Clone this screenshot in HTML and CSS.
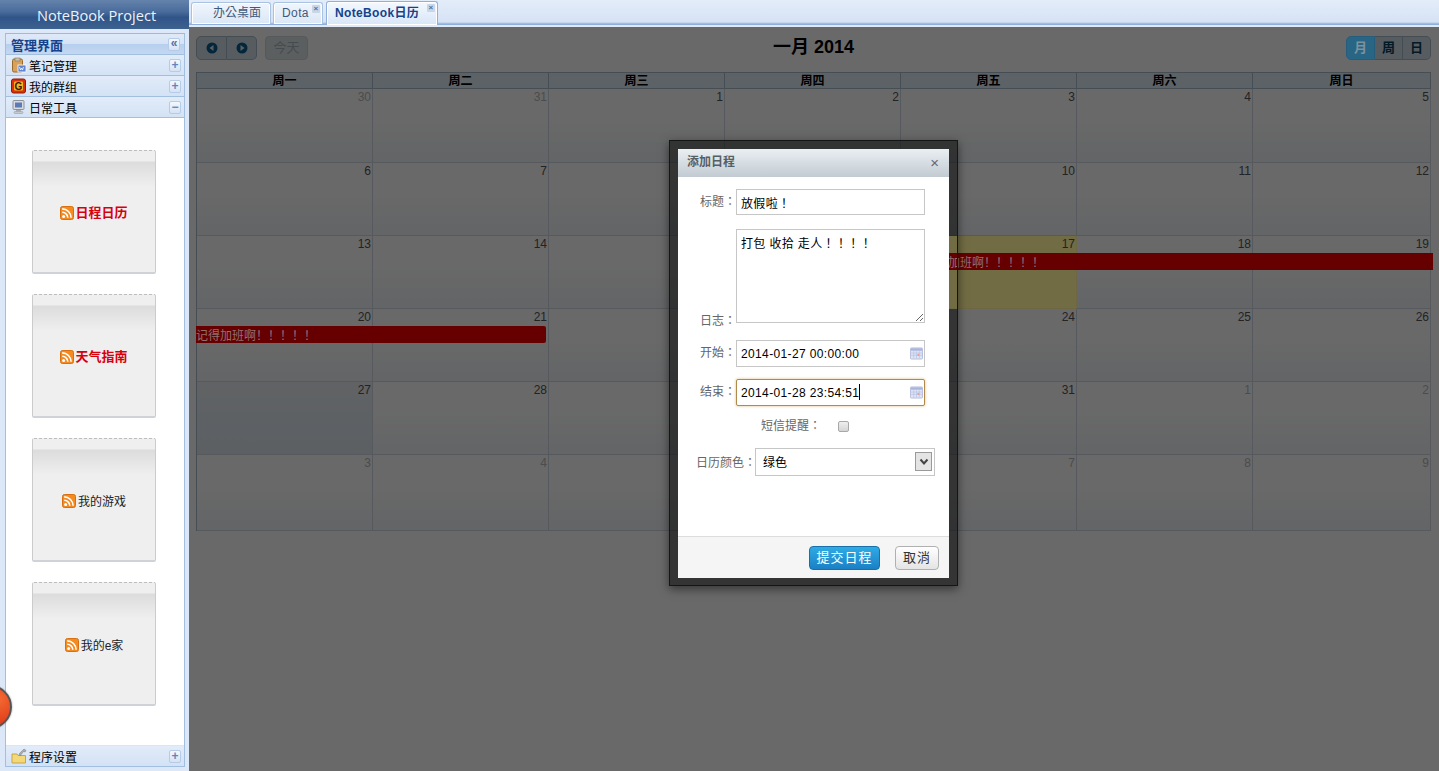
FILE: index.html
```html
<!DOCTYPE html>
<html lang="zh-Hant">
<head>
<meta charset="utf-8">
<title>NoteBook Project</title>
<link rel="stylesheet" href="styles.css">
</head>
<body>
<svg class="sprites" width="0" height="0" aria-hidden="true">
  <symbol id="rss" viewBox="0 0 14 14">
    <rect x="0.5" y="0.5" width="13" height="13" rx="2" fill="#f58a1f" stroke="#d9700f"/>
    <circle cx="3.6" cy="10.4" r="1.5" fill="#fff"/>
    <path d="M2.2 6.2a5.6 5.6 0 0 1 5.6 5.6M2.2 2.9a8.9 8.9 0 0 1 8.9 8.9" fill="none" stroke="#fff" stroke-width="1.6"/>
  </symbol>
  <symbol id="cal" viewBox="0 0 14 13">
    <rect x="0.5" y="0.5" width="13" height="12" rx="1" fill="#dfe4f5" stroke="#b4bcdc"/>
    <rect x="1" y="1" width="12" height="2.5" fill="#a9b4dc"/>
    <path d="M1 6h12M1 8.500h12M4 4v8M7 4v8M10 4v8" stroke="#b9c3e6" stroke-width=".8"/>
    <rect x="8" y="7" width="2" height="2" fill="#e6a090"/>
  </symbol>
</svg>

<aside class="sidebar">
  <h1 class="brand">NoteBook Project</h1>
  <div class="accordion">
    <div class="acc-title"><span class="acc-title-text">管理界面</span><span class="tool tool-collapse">«</span></div>
    <div class="acc-row">
      <svg class="acc-icon" viewBox="0 0 16 16"><rect x="1.500" y="2" width="10" height="13" rx="1.500" fill="#d9a25a" stroke="#9a6a2a"/><rect x="4" y="1" width="5" height="3" fill="#c9c2b0" stroke="#85745a" stroke-width=".6"/><rect x="7" y="8" width="8" height="7" fill="#5f86cf" stroke="#fff" stroke-width=".8"/><path d="M8.500 10l1 3 1-2 1 2 1-3" fill="none" stroke="#fff" stroke-width=".8"/></svg>
      <span class="acc-label">笔记管理</span><span class="tool">+</span>
    </div>
    <div class="acc-row">
      <svg class="acc-icon" viewBox="0 0 16 16"><rect x="0.500" y="1" width="14" height="14" rx="2" fill="#d9300f" stroke="#8c1d08"/><rect x="3" y="3.500" width="9" height="9" rx="1" fill="#f5b520"/><text x="7.500" y="11.500" text-anchor="middle" class="g-letter">G</text></svg>
      <span class="acc-label">我的群组</span><span class="tool">+</span>
    </div>
    <div class="acc-row">
      <svg class="acc-icon" viewBox="0 0 16 16"><rect x="2" y="1.500" width="11" height="9" rx="1" fill="#d8dbe0" stroke="#8c929c"/><rect x="4" y="3.500" width="7" height="5" fill="#5c7bb5"/><rect x="5" y="11" width="5" height="1.500" fill="#a6abb3"/><rect x="3" y="12.500" width="9" height="2" rx="1" fill="#c6c9cf" stroke="#8c929c" stroke-width=".5"/></svg>
      <span class="acc-label">日常工具</span><span class="tool">−</span>
    </div>
    <div class="acc-body">
      <a class="tool-card hot"><svg class="rss"><use href="#rss"/></svg>日程日历</a>
      <a class="tool-card hot"><svg class="rss"><use href="#rss"/></svg>天气指南</a>
      <a class="tool-card"><svg class="rss"><use href="#rss"/></svg>我的游戏</a>
      <a class="tool-card"><svg class="rss"><use href="#rss"/></svg>我的e家</a>
    </div>
    <div class="acc-row acc-last">
      <svg class="acc-icon" viewBox="0 0 16 16"><path d="M1 6h5l1 1.500h7.500V15H1z" fill="#f3d878" stroke="#c7a544"/><path d="M8 6l5-5 2 1.500-1 1.500-1.500-.5L9 8z" fill="#a9adb3" stroke="#777" stroke-width=".5"/></svg>
      <span class="acc-label">程序设置</span><span class="tool">+</span>
    </div>
  </div>
  <span class="orb"></span>
</aside>

<main class="main">
  <nav class="tabs">
    <a class="tab tab-home">办公桌面</a>
    <a class="tab tab-dota">Dota<span class="tab-close">×</span></a>
    <a class="tab tab-active">NoteBook日历<span class="tab-close">×</span></a>
  </nav>

  <section class="workspace">
    <div class="toolbar">
      <div class="toolbar-left">
        <div class="btn-group">
          <span class="cal-btn"><svg class="nav-ico" viewBox="0 0 12 12"><circle cx="6" cy="6" r="5.500"/><path d="M7.500 3v6L3.500 6z" class="nav-arrow"/></svg></span>
          <span class="cal-btn"><svg class="nav-ico" viewBox="0 0 12 12"><circle cx="6" cy="6" r="5.500"/><path d="M4.500 3v6L8.500 6z" class="nav-arrow"/></svg></span>
        </div>
        <span class="cal-btn today-btn">今天</span>
      </div>
      <h2 class="cal-title">一月 2014</h2>
      <div class="btn-group view-group">
        <span class="cal-btn view-active">月</span>
        <span class="cal-btn">周</span>
        <span class="cal-btn">日</span>
      </div>
    </div>

    <div class="calendar">
      <div class="cal-head">周一</div><div class="cal-head">周二</div><div class="cal-head">周三</div><div class="cal-head">周四</div><div class="cal-head">周五</div><div class="cal-head">周六</div><div class="cal-head">周日</div>
      <div class="day muted">30</div><div class="day muted">31</div><div class="day">1</div><div class="day">2</div><div class="day">3</div><div class="day">4</div><div class="day">5</div>
      <div class="day">6</div><div class="day">7</div><div class="day">8</div><div class="day">9</div><div class="day">10</div><div class="day">11</div><div class="day">12</div>
      <div class="day">13</div><div class="day">14</div><div class="day">15</div><div class="day">16</div><div class="day day-today">17</div><div class="day">18</div><div class="day">19</div>
      <div class="day">20</div><div class="day">21</div><div class="day">22</div><div class="day">23</div><div class="day">24</div><div class="day">25</div><div class="day">26</div>
      <div class="day day-selected">27</div><div class="day">28</div><div class="day">29</div><div class="day">30</div><div class="day">31</div><div class="day muted">1</div><div class="day muted">2</div>
      <div class="day muted">3</div><div class="day muted">4</div><div class="day muted">5</div><div class="day muted">6</div><div class="day muted">7</div><div class="day muted">8</div><div class="day muted">9</div>
      <div class="event event-a" lang="zh-Hans">记得加班啊！！！！！</div>
      <div class="event event-b" lang="zh-Hans">记得加班啊！！！！！</div>
    </div>

    <div class="backdrop"></div>
    <div class="modal-frame"></div>
    <div class="modal-edge"></div>
    <form class="modal">
      <header class="modal-head"><span>添加日程</span><span class="modal-x">×</span></header>
      <div class="modal-body">
        <div class="field field-title">
          <label class="field-label">标题：</label>
          <input class="text-input h26" type="text" value="放假啦！">
        </div>
        <div class="field field-log">
          <label class="field-label">日志：</label>
          <textarea class="text-area">打包 收拾 走人！！！！</textarea>
        </div>
        <div class="field field-start">
          <label class="field-label">开始：</label>
          <span class="date-wrap">
            <input class="text-input h27" type="text" value="2014-01-27 00:00:00">
            <svg class="date-ico"><use href="#cal"/></svg>
          </span>
        </div>
        <div class="field field-end">
          <label class="field-label">结束：</label>
          <span class="date-wrap">
            <input class="text-input h27 focused" type="text" value="2014-01-28 23:54:51">
            <i class="caret"></i>
            <svg class="date-ico"><use href="#cal"/></svg>
          </span>
        </div>
        <div class="field-sms">
          <label class="plain-label">短信提醒：</label>
          <input class="check" type="checkbox">
        </div>
        <div class="field-color">
          <label class="plain-label color-label">日历颜色：</label>
          <span class="select-wrap">
            <select class="select"><option>绿色</option></select>
            <span class="select-arrow"><svg viewBox="0 0 10 8" width="10" height="8"><path d="M1.500 1.500L5 5.500l3.500-4" fill="none" stroke="#444" stroke-width="2"/></svg></span>
          </span>
        </div>
      </div>
      <footer class="modal-foot">
        <button class="btn btn-primary" type="button">提交日程</button>
        <button class="btn btn-plain" type="button">取消</button>
      </footer>
    </form>
  </section>
</main>
</body>
</html>
```
FILE: styles.css
```css
* { box-sizing: border-box; }
html, body { height: 100%; }
body {
  margin: 0;
  height: 771px;
  overflow: hidden;
  display: flex;
  background: #dce8f8;
  font: 12px/1.2 "Liberation Sans", "Noto Sans CJK TC", sans-serif;
  color: #000;
}
.sprites { position: absolute; }

/* sidebar */
.sidebar {
  position: relative;
  flex: 0 0 189px;
  width: 189px;
  height: 771px;
  display: flex;
  flex-direction: column;
  overflow: hidden;
  background: #dce8f8;
}
.brand {
  margin: 0;
  height: 29px;
  flex: none;
  display: flex;
  align-items: center;
  justify-content: center;
  padding-left: 4px;
  font: 400 14.6px "Open Sans", sans-serif;
  color: #edf3fa;
  background: linear-gradient(#6482ab 0, #4a6c9c 40%, #2f5488 60%, #3d628f 100%);
}
.accordion {
  flex: 1;
  margin: 4px 4px 4px 5px;
  display: flex;
  flex-direction: column;
  border: 1px solid #a3bfe0;
  border-top-color: #9db9dc;
}
.acc-title {
  height: 21px;
  flex: none;
  display: flex;
  align-items: center;
  justify-content: space-between;
  padding: 0 4px 0 5px;
  font-weight: 700;
  font-size: 13px;
  color: #15428b;
  background: linear-gradient(#dfe9f8 0, #d5e3f5 50%, #b7cfee 50%, #c3d7f1 100%);
  border-bottom: 1px solid #a3bfe0;
}
.acc-title-text { padding-top: 4px; }
.acc-row {
  height: 21px;
  flex: none;
  display: flex;
  align-items: center;
  padding: 0 3px 0 5px;
  background: linear-gradient(#e2ecf9, #d3e2f5);
  border-bottom: 1px solid #a3bfe0;
}
.acc-last { height: 20px; border-bottom: 0; border-top: 0; }
.acc-icon { width: 16px; height: 16px; flex: none; }
.g-letter { font: 700 10px "Liberation Sans", sans-serif; fill: #3a1a05; }
.acc-label { margin-left: 2px; flex: 1; padding-top: 4px; }
.tool {
  width: 12px;
  height: 13px;
  flex: none;
  display: flex;
  align-items: center;
  justify-content: center;
  font: 700 12px/1 "Liberation Sans", sans-serif;
  color: #5f87bf;
  background: linear-gradient(#f4f8fd, #d5e2f4);
  border: 1px solid #b5cbe6;
  border-radius: 2px;
}
.tool-collapse { color: #4a74ad; font-size: 12px; padding-bottom: 2px; }
.acc-body {
  flex: 1;
  display: flex;
  flex-direction: column;
  gap: 20px;
  padding: 32px 0 0 26px;
  background: #fff;
  border-bottom: 1px solid #dbe6f5;
}
.tool-card {
  width: 124px;
  height: 124px;
  flex: none;
  display: flex;
  align-items: center;
  justify-content: center;
  gap: 2px;
  padding-top: 6px;
  background: #efefef linear-gradient(#efefef 0, #efefef 10px, #dcdcdc 11px, #efefef 36px) no-repeat;
  border: 1px solid #cbcbcb;
  border-top: 1px dashed #bdbdbd;
  border-bottom: 2px solid #cfd3d8;
  border-radius: 2px;
  color: #222;
}
.rss { width: 14px; height: 14px; flex: none; margin-top: -4px; }
.hot { color: #d8000c; font-weight: 700; font-size: 13px; gap: 1px; padding-top: 2px; }
.hot .rss { margin-top: 0; }
.orb {
  position: absolute;
  left: -32px;
  top: 685px;
  width: 44px;
  height: 44px;
  border-radius: 50%;
  background: radial-gradient(circle at 70% 30%, #f36a32 0, #e2401c 60%, #c4260f 100%);
  border: 2px solid #555;
  box-shadow: 0 0 2px #999;
}

/* tabs */
.main {
  flex: 1;
  min-width: 0;
  height: 771px;
  display: flex;
  flex-direction: column;
}
.tabs {
  height: 27px;
  flex: none;
  display: flex;
  align-items: flex-start;
  gap: 2px;
  padding: 2px 0 0 2px;
  background: linear-gradient(#e3ecf9 0, #d6e3f5 22px, #8fb0da 24px, #8fb0da 25px, #dfe9f7 25px);
}
.tab {
  position: relative;
  height: 22px;
  display: flex;
  align-items: center;
  color: #3d5a80;
  background: linear-gradient(#f0f5fc, #dbe7f6);
  border: 1px solid #a9c2e2;
  border-bottom: 0;
  border-radius: 3px 3px 0 0;
  box-shadow: inset 0 0 0 1px #fff;
}
.tab-home { width: 80px; padding-left: 21px; }
.tab-dota { width: 50px; padding-left: 8px; margin-right: 1px; letter-spacing: .4px; }
.tab-active {
  width: 112px;
  height: 24px;
  margin-top: -1px;
  padding-left: 8px;
  font-weight: 700;
  letter-spacing: .35px;
  color: #15428b;
  background: linear-gradient(#f4f8fd, #d8e6f8);
  border-color: #8fb0da;
}
.tab-close {
  position: absolute;
  right: 2px;
  top: 2px;
  width: 8px;
  height: 8px;
  display: flex;
  align-items: center;
  justify-content: center;
  font: 700 8px/1 "Liberation Sans", sans-serif;
  color: #5a6e8c;
  background: #c8d6ea;
  border-radius: 1px;
}

/* calendar */
.workspace {
  position: relative;
  flex: 1;
  display: flex;
  flex-direction: column;
  padding: 9px 8px 0 7px;
  background: #fff;
}
.toolbar {
  height: 24px;
  margin-bottom: 12px;
  flex: none;
  display: grid;
  grid-template-columns: 1fr auto 1fr;
  align-items: center;
}
.toolbar-left { display: flex; gap: 8px; }
.btn-group { display: flex; }
.view-group { justify-self: end; }
.cal-btn {
  height: 24px;
  width: 30px;
  display: flex;
  align-items: center;
  justify-content: center;
  font-size: 13px;
  font-weight: 700;
  color: #073f5c;
  background: #d2e0ea;
  border: 1px solid #a7bccb;
  border-left-width: 0;
}
.btn-group .cal-btn:first-child { border-left-width: 1px; border-radius: 5px 0 0 5px; width: 31px; }
.btn-group .cal-btn:last-child { border-radius: 0 5px 5px 0; }
.view-group .cal-btn { width: 28px; }
.view-group .cal-btn:first-child { width: 29px; }
.view-group .view-active {
  position: relative;
  z-index: 11;
  background: #296585;
  border-color: #265d7c;
  color: #7f929c;
}
.today-btn {
  width: 43px;
  border-radius: 4px;
  border: 1px solid #cfd8de;
  background: #dfe6ea;
  color: #a7b6bf;
  font-weight: 400;
}
.nav-ico { width: 12px; height: 12px; fill: #0a5c8f; }
.nav-arrow { fill: #dbe6ee; }
.cal-title { margin: 0; font-size: 18px; font-weight: 700; line-height: 22px; margin-top: -2px; color: #000; }
.calendar {
  position: relative;
  display: grid;
  grid-template-columns: repeat(6, 176px) 1fr;
  grid-template-rows: 16px 74px 73px 73px 73px 73px 76px;
  border-top: 1px solid #a9bdcf;
  border-left: 1px solid #a9bdcf;
}
.cal-head {
  display: flex;
  align-items: center;
  justify-content: center;
  padding-top: 2px;
  font-weight: 700;
  background: #e0edf7;
  border-right: 1px solid #a9bdcf;
  border-bottom: 1px solid #a9bdcf;
}
.day {
  text-align: right;
  padding: 1px 1px 0 0;
  color: #555;
  font-size: 12px;
  background: linear-gradient(#fff 40%, #f0f4f8);
  border-right: 1px solid #d0dae4;
  border-bottom: 1px solid #d0dae4;
}
.muted { color: #b9b9b9; }
.day-selected { background: linear-gradient(#eaeff4, #dfe8f1); }
.day-today {
  position: relative;
  z-index: 11;
  color: #222;
  background: #716c44;
  border-color: #6d6843;
}
.event {
  position: absolute;
  z-index: 12;
  height: 17px;
  line-height: 20px;
  padding: 0;
  background: #660000;
  color: #93706f;
  white-space: nowrap;
  overflow: hidden;
}
.event-a { left: 727px; right: -2px; top: 180px; }
.event-b { left: -1px; width: 350px; top: 253px; border-radius: 0 2px 2px 0; }

/* modal */
.backdrop {
  position: absolute;
  inset: 0;
  z-index: 10;
  background: rgba(0, 0, 0, .59);
}
.modal-frame, .modal-edge {
  position: absolute;
  left: 480px;
  top: 113px;
  width: 289px;
  height: 446px;
}
.modal-frame { z-index: 10; background: rgba(0, 0, 0, .5); }
.modal-edge {
  z-index: 13;
  border: 1px solid #151515;
  box-shadow: 0 3px 9px rgba(0, 0, 0, .5);
}
.modal {
  position: absolute;
  z-index: 20;
  left: 489px;
  top: 122px;
  width: 271px;
  height: 429px;
  margin: 0;
  display: flex;
  flex-direction: column;
  background: #fff;
}
.modal-head {
  height: 28px;
  flex: none;
  display: flex;
  align-items: center;
  justify-content: space-between;
  padding: 0 10px 2px 9px;
  font-weight: 700;
  color: #555f66;
  background: linear-gradient(#eaeff2, #c2cbd2);
}
.modal-x { font: 400 15px/1 "Liberation Sans", sans-serif; color: #667; padding-top: 1px; }
.modal-body { flex: 1; padding-top: 12px; display: flex; flex-direction: column; }
.field { display: flex; align-items: center; margin-bottom: 12px; }
.field-title { margin-bottom: 14px; }
.field-log { align-items: flex-end; margin-bottom: 17px; }
.field-label {
  width: 58px;
  flex: none;
  text-align: right;
  color: #666;
}
.field-log .field-label { margin-bottom: -5px; }
.text-input, .text-area {
  width: 189px;
  margin: 0;
  display: block;
  padding: 0 4px;
  font: 12px/1.2 "Liberation Sans", "Noto Sans CJK TC", sans-serif;
  letter-spacing: .36px;
  color: #000;
  background: #fff;
  border: 1px solid #c6c6c6;
  border-radius: 0;
  outline: 0;
}
.h26 { height: 26px; }
.h27 { height: 27px; }
.text-area { height: 94px; padding-top: 7px; resize: both; }
.focused {
  border-color: #b08a4a;
  border-radius: 2px;
  box-shadow: 0 0 3px #d8bc80;
}
.date-wrap { position: relative; display: block; width: 189px; }
.date-ico { position: absolute; right: 2px; top: 7px; width: 13px; height: 13px; }
.caret { position: absolute; left: 123px; top: 5px; width: 1px; height: 16px; background: #000; }
.field-sms {
  display: flex;
  align-items: center;
  height: 19px;
  margin-top: -1px;
  padding-left: 83px;
  margin-bottom: 12px;
}
.plain-label { color: #666; flex: none; }
.color-label { padding-top: 2px; }
.check {
  appearance: none;
  width: 11px;
  height: 11px;
  margin: 0 0 0 17px;
  background: linear-gradient(#eee, #d5d5d5);
  border: 1px solid #a8a8a8;
  border-radius: 2px;
}
.field-color { display: flex; align-items: center; padding-left: 18px; }
.select-wrap { position: relative; display: block; width: 180px; margin-left: -1px; }
.select {
  appearance: none;
  display: block;
  width: 180px;
  height: 28px;
  padding: 2px 0 0 7px;
  font: 12px "Liberation Sans", "Noto Sans CJK TC", sans-serif;
  color: #000;
  background: #fff;
  border: 1px solid #c6c6c6;
  border-radius: 0;
}
.select-arrow {
  position: absolute;
  right: 3px;
  top: 4px;
  width: 17px;
  height: 19px;
  display: flex;
  align-items: center;
  justify-content: center;
  background: #e4e4e4;
  border: 1px solid #9a9a9a;
  pointer-events: none;
}
.modal-foot {
  height: 42px;
  flex: none;
  display: flex;
  align-items: center;
  justify-content: flex-end;
  gap: 15px;
  padding: 0 10px 0 0;
  background: #f5f5f5;
  border-top: 1px solid #ddd;
}
.btn {
  height: 24px;
  margin: 0;
  padding: 0 0 2px;
  font: 13px "Liberation Sans", "Noto Sans CJK TC", sans-serif;
  letter-spacing: 1px;
  border-radius: 4px;
}
.btn-primary {
  width: 71px;
  color: #fff;
  background: linear-gradient(#2eabe6, #1b80c4);
  border: 1px solid #1a6fa8;
}
.btn-plain {
  width: 44px;
  color: #333;
  background: linear-gradient(#fff, #e4e4e4);
  border: 1px solid #b0b0b0;
}
```
